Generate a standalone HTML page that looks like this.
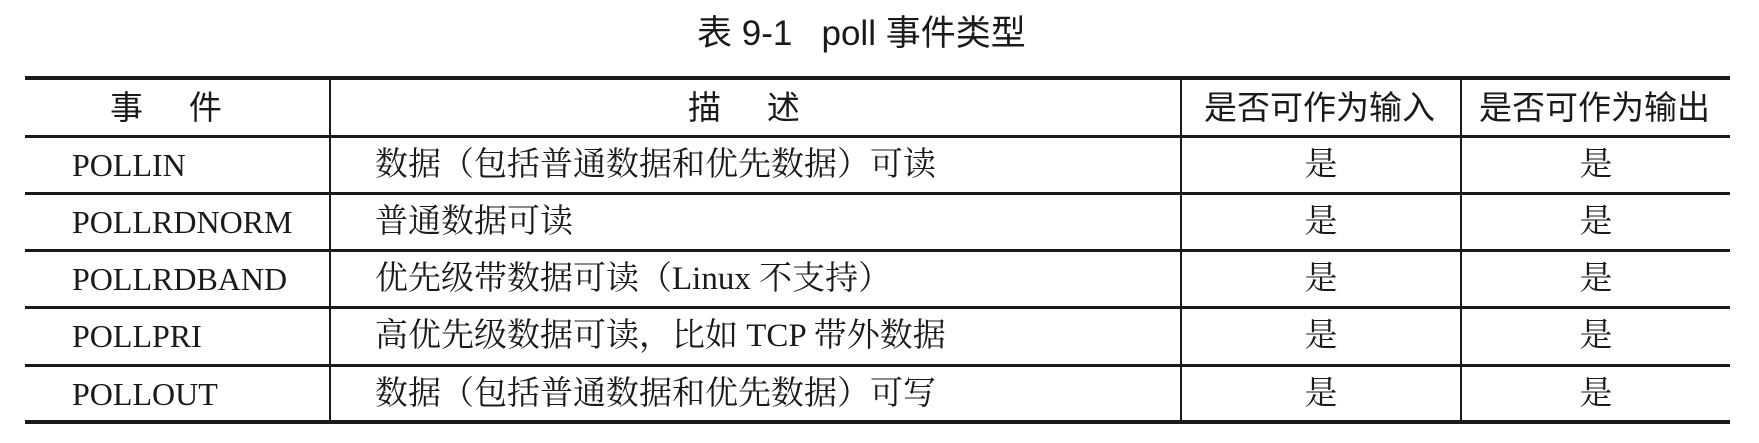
<!DOCTYPE html>
<html><head><meta charset="utf-8"><style>
body{margin:0;width:1759px;height:443px;background:#fff;position:relative;overflow:hidden;color:#1a1a1a}
.a{position:absolute;white-space:nowrap}
.h{background:#1a1a1a;position:absolute}
.sans{font-family:"Liberation Sans","Noto Sans CJK SC",sans-serif}
.ser{font-family:"Liberation Serif","Noto Serif CJK SC",serif;font-size:32px;line-height:40px}
.c{text-align:center}
</style></head><body>
<div class="a sans" style="left:697px;top:11px;font-size:35px;line-height:46px">表 9-1&nbsp;&nbsp;&nbsp;poll 事件类型</div>

<div class="h" style="left:25px;top:76px;width:1705px;height:4px"></div>
<div class="h" style="left:25px;top:135px;width:1705px;height:3px"></div>
<div class="h" style="left:25px;top:192px;width:1705px;height:3px"></div>
<div class="h" style="left:25px;top:249px;width:1705px;height:3px"></div>
<div class="h" style="left:25px;top:306px;width:1705px;height:3px"></div>
<div class="h" style="left:25px;top:364px;width:1705px;height:3px"></div>
<div class="h" style="left:25px;top:420px;width:1705px;height:4px"></div>
<div class="h" style="left:329px;top:78px;width:2px;height:344px"></div>
<div class="h" style="left:1180px;top:78px;width:2px;height:344px"></div>
<div class="h" style="left:1460px;top:78px;width:2px;height:344px"></div>

<div class="a sans" style="left:110px;top:86px;font-size:33px;line-height:44px">事&nbsp;&nbsp;&nbsp;&nbsp;&nbsp;件</div>
<div class="a sans" style="left:688px;top:86px;font-size:33px;line-height:44px">描&nbsp;&nbsp;&nbsp;&nbsp;&nbsp;述</div>
<div class="a sans" style="left:1204px;top:86px;font-size:33px;line-height:44px">是否可作为输入</div>
<div class="a sans" style="left:1479px;top:86px;font-size:33px;line-height:44px">是否可作为输出</div>

<div class="a ser" style="left:72px;top:145px">POLLIN</div>
<div class="a ser" style="left:72px;top:202px">POLLRDNORM</div>
<div class="a ser" style="left:72px;top:259px">POLLRDBAND</div>
<div class="a ser" style="left:72px;top:316px">POLLPRI</div>
<div class="a ser" style="left:72px;top:374px">POLLOUT</div>

<div class="a ser" style="left:375px;top:145px;font-size:33px">数据（包括普通数据和优先数据）可读</div>
<div class="a ser" style="left:375px;top:202px;font-size:33px">普通数据可读</div>
<div class="a ser" style="left:375px;top:259px;font-size:33px">优先级带数据可读（Linux 不支持）</div>
<div class="a ser" style="left:375px;top:316px;font-size:33px">高优先级数据可读，比如 TCP 带外数据</div>
<div class="a ser" style="left:375px;top:374px;font-size:33px">数据（包括普通数据和优先数据）可写</div>

<div class="a ser c" style="left:1182px;width:278px;top:145px;font-size:33px">是</div>
<div class="a ser c" style="left:1182px;width:278px;top:202px;font-size:33px">是</div>
<div class="a ser c" style="left:1182px;width:278px;top:259px;font-size:33px">是</div>
<div class="a ser c" style="left:1182px;width:278px;top:316px;font-size:33px">是</div>
<div class="a ser c" style="left:1182px;width:278px;top:374px;font-size:33px">是</div>
<div class="a ser c" style="left:1462px;width:268px;top:145px;font-size:33px">是</div>
<div class="a ser c" style="left:1462px;width:268px;top:202px;font-size:33px">是</div>
<div class="a ser c" style="left:1462px;width:268px;top:259px;font-size:33px">是</div>
<div class="a ser c" style="left:1462px;width:268px;top:316px;font-size:33px">是</div>
<div class="a ser c" style="left:1462px;width:268px;top:374px;font-size:33px">是</div>
</body></html>
